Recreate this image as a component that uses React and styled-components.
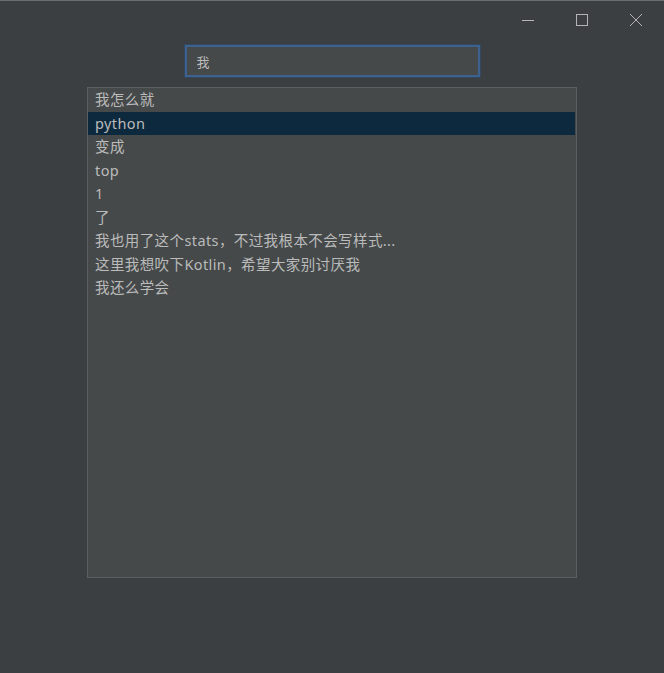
import React, { useState } from "react";
import styled, { createGlobalStyle } from "styled-components";

const items = [
  "我怎么就",
  "python",
  "变成",
  "top",
  "1",
  "了",
  "我也用了这个stats，不过我根本不会写样式...",
  "这里我想吹下Kotlin，希望大家别讨厌我",
  "我还么学会",
];

function App() {
  const [query, setQuery] = useState("我");
  const [selected, setSelected] = useState(1);

  return (
    <>
      <GlobalStyle />
      <Window>
        <TitleBar>
          <WinButton aria-label="minimize">
            <svg width="14" height="14" viewBox="0 0 14 14">
              <line x1="1" y1="7.5" x2="13" y2="7.5" stroke="#b4b4b4" strokeWidth="1" />
            </svg>
          </WinButton>
          <WinButton aria-label="maximize">
            <svg width="14" height="14" viewBox="0 0 14 14">
              <rect x="1.5" y="1.5" width="11" height="11" fill="none" stroke="#b4b4b4" strokeWidth="1" />
            </svg>
          </WinButton>
          <WinButton aria-label="close">
            <svg width="14" height="14" viewBox="0 0 14 14">
              <path d="M1 1 L13 13 M13 1 L1 13" stroke="#b4b4b4" strokeWidth="1" />
            </svg>
          </WinButton>
        </TitleBar>
        <Body>
          <SearchField value={query} onChange={(e) => setQuery(e.target.value)} />
          <ResultList>
            {items.map((item, i) => (
              <Row key={i} $active={i === selected} onClick={() => setSelected(i)}>
                {item}
              </Row>
            ))}
          </ResultList>
        </Body>
      </Window>
    </>
  );
}

const GlobalStyle = createGlobalStyle`
  html, body {
    margin: 0;
    padding: 0;
    background: #3c3f41;
  }
  body {
    font-family: "Noto Sans", "Noto Sans CJK SC", sans-serif;
  }
`;

const Window = styled.div`
  width: 664px;
  height: 673px;
  box-sizing: border-box;
  border-top: 1px solid #6a6c6e;
  background: #3c3f41;
  display: flex;
  flex-direction: column;
`;

const TitleBar = styled.div`
  height: 35px;
  display: flex;
  justify-content: flex-end;
  align-items: center;
  padding-right: 1px;
`;

const WinButton = styled.button`
  width: 54px;
  height: 35px;
  border: none;
  background: transparent;
  padding: 0;
  display: flex;
  align-items: center;
  justify-content: center;
  padding-top: 2px;
`;

const Body = styled.div`
  display: flex;
  flex-direction: column;
  padding-left: 87px;
  padding-right: 87px;
  align-items: stretch;
`;

const SearchField = styled.input`
  align-self: center;
  width: 295px;
  height: 32px;
  box-sizing: border-box;
  margin: 9px 0 10px 0;
  background: #45494a;
  border: 2px solid #3e6290;
  box-shadow: 0 0 0 1px #33485f;
  outline: none;
  color: #bbbbbb;
  font-family: "Noto Sans CJK SC", sans-serif;
  font-size: 13px;
  padding: 0 10px;
`;

const ResultList = styled.div`
  height: 491px;
  box-sizing: border-box;
  border: 1px solid #5c5f61;
  background: #45494a;
  padding: 0 1px 0 0;
`;

const Row = styled.div`
  height: 23.5px;
  line-height: 23.5px;
  padding-left: 7px;
  color: #bbbbbb;
  font-family: "Noto Sans", "Noto Sans CJK SC", sans-serif;
  font-size: 14.5px;
  letter-spacing: 0.4px;
  white-space: nowrap;
  background: ${(p) => (p.$active ? "#0d293e" : "transparent")};
  cursor: default;
`;

export default App;
